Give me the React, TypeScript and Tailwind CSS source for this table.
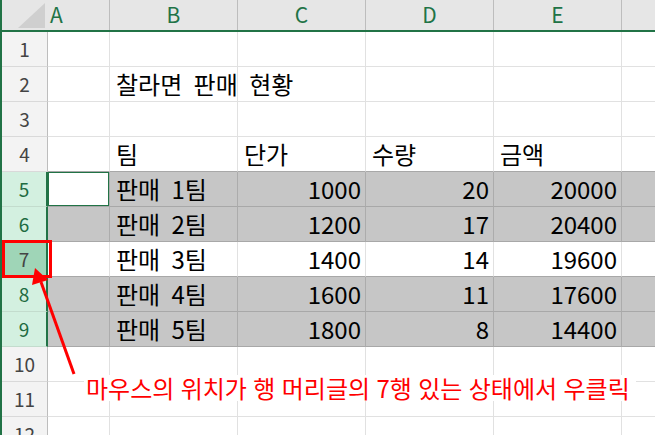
import React from "react";

const font = { fontFamily: '"Noto Sans CJK KR", "Noto Sans", sans-serif' };

type Row = {
  n: number;
  cells: [string, string, string, string, string];
};

const rows: Row[] = [
  { n: 1, cells: ["", "", "", "", ""] },
  { n: 2, cells: ["", "찰라면 판매 현황", "", "", ""] },
  { n: 3, cells: ["", "", "", "", ""] },
  { n: 4, cells: ["", "팀", "단가", "수량", "금액"] },
  { n: 5, cells: ["", "판매 1팀", "1000", "20", "20000"] },
  { n: 6, cells: ["", "판매 2팀", "1200", "17", "20400"] },
  { n: 7, cells: ["", "판매 3팀", "1400", "14", "19600"] },
  { n: 8, cells: ["", "판매 4팀", "1600", "11", "17600"] },
  { n: 9, cells: ["", "판매 5팀", "1800", "8", "14400"] },
  { n: 10, cells: ["", "", "", "", ""] },
  { n: 11, cells: ["", "", "", "", ""] },
  { n: 12, cells: ["", "", "", "", ""] },
];

const selected = [5, 6, 8, 9];
const widths = ["w-[62px]", "w-[128px]", "w-[128px]", "w-[128px]", "w-[128px]"];

function RowHeader({ n }: { n: number }) {
  const sel = selected.includes(n);
  const cur = n === 7;
  return (
    <div
      className={
        "w-[46px] h-full shrink-0 flex items-center justify-center text-[19px] border-b " +
        (cur
          ? "bg-[#9fd5b7] text-[#444] border-r-2 border-r-[#217346] border-b-[#b9d8c6]"
          : sel
          ? "bg-[#d3f0e0] text-[#1e6b41] border-r-2 border-r-[#217346] border-b-[#c3dccd]"
          : "bg-[#f3f3f3] text-[#444] border-r border-r-[#bdbdbd] border-b-[#d9d9d9]")
      }
    >
      {n}
    </div>
  );
}

function DataRow({ row }: { row: Row }) {
  const sel = selected.includes(row.n);
  const darkBottom = [4, 6, 7, 9].includes(row.n) || sel;
  const bg = sel ? "bg-[#c6c6c6]" : "bg-white";
  const vline = sel ? "border-r-[#acacac]" : "border-r-[#e1e1e1]";
  const hline = darkBottom ? "border-b-[#a8a8a8]" : "border-b-[#e1e1e1]";
  return (
    <div className="flex h-[35px]">
      <RowHeader n={row.n} />
      {row.cells.map((c, i) => {
        const numeric = i >= 2 && row.n >= 5 && row.n <= 9;
        const active = row.n === 5 && i === 0;
        // the title spills over into column C, as in the sheet
        const spill = row.n === 2 && i === 1;
        return (
          <div
            key={i}
            className={
              widths[i] +
              " h-full shrink-0 border-r border-b flex items-center whitespace-nowrap text-[24px] text-black [word-spacing:6px] " +
              (numeric ? "justify-end pr-[4px] " : "pl-[6px] ") +
              (active ? "bg-white shadow-[inset_0_0_0_1px_#217346] " : bg + " ") +
              vline +
              " " +
              hline +
              (spill ? " relative z-10" : "")
            }
          >
            {c}
          </div>
        );
      })}
      <div className={"flex-1 h-full border-b " + bg + " " + hline} />
    </div>
  );
}

export default function App() {
  return (
    <div
      className="relative w-[655px] h-[435px] overflow-hidden bg-white border-l-2 border-[#217346]"
      style={font}
    >
      {/* column headers */}
      <div className="flex h-[32px] bg-[#e6e6e6] border-b-2 border-[#217346] text-[21px] text-[#217346]">
        <div className="w-[46px] shrink-0 relative">
          <svg className="absolute left-[16px] top-[3px]" width="28" height="26" viewBox="0 0 28 26">
            <polygon points="0,25 27,0 27,25" fill="#cfcfcf" />
          </svg>
        </div>
        <div className="w-[62px] shrink-0 border-r border-[#bdbdbd] flex items-center pl-[2px]">A</div>
        {["B", "C", "D", "E"].map((l) => (
          <div key={l} className="w-[128px] shrink-0 border-r border-[#bdbdbd] flex items-center justify-center">
            {l}
          </div>
        ))}
        <div className="flex-1" />
      </div>

      {rows.map((r) => (
        <DataRow key={r.n} row={r} />
      ))}

      {/* row 7 highlight */}
      <div className="absolute left-0 top-[240px] w-[50px] h-[38px] border-[3px] border-[#ff0000]" />

      {/* arrow */}
      <svg className="absolute left-0 top-0 pointer-events-none" width="655" height="435">
        <line x1="72" y1="374" x2="39" y2="282" stroke="#ff0000" strokeWidth="3" />
        <polygon points="33,268 30,285 46,280" fill="#ff0000" />
      </svg>

      {/* note */}
      <div className="absolute z-20 left-[82px] top-[375px] w-[552px] h-[26px] bg-white flex items-center text-[24px] text-[#ff0000] whitespace-nowrap pl-[2px] [word-spacing:1px]">
        마우스의 위치가 행 머리글의 7행 있는 상태에서 우클릭
      </div>
    </div>
  );
}
